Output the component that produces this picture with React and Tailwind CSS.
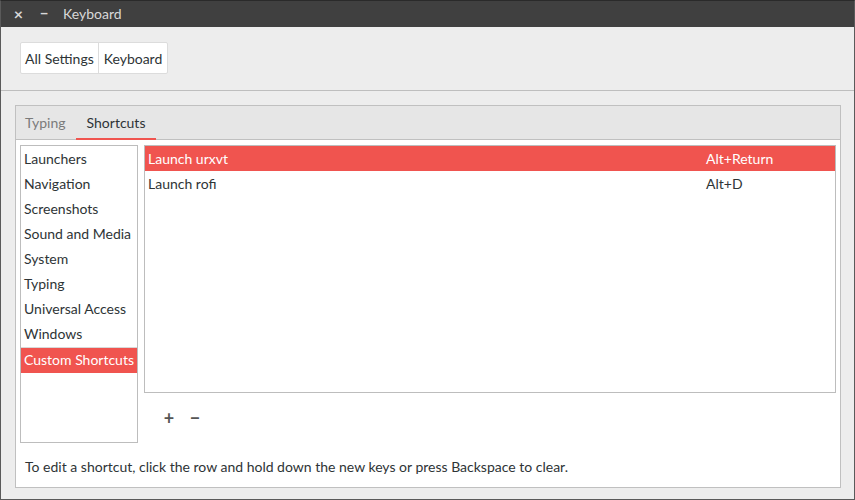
const CATEGORIES = [
  'Launchers',
  'Navigation',
  'Screenshots',
  'Sound and Media',
  'System',
  'Typing',
  'Universal Access',
  'Windows',
];

const SHORTCUTS = [
  { name: 'Launch urxvt', keys: 'Alt+Return', selected: true },
  { name: 'Launch rofi', keys: 'Alt+D', selected: false },
];

export default function App() {
  return (
    <div
      className="w-[855px] h-[500px] flex flex-col bg-[#ededed] border border-[#5a5a5a] border-t-[#2a2a2a] overflow-hidden text-[14px] text-[#2e3436]"
      style={{ fontFamily: '"Lato", "Noto Sans", sans-serif' }}
    >
      <div className="h-[26px] shrink-0 flex items-center bg-[#404040] text-[#d8d8d8] pb-[1px]">
        <span className="w-[17px] ml-[9px] text-center text-[16px] font-bold leading-none">×</span>
        <span className="w-[12px] ml-[11px] text-center text-[15px] font-bold leading-none">−</span>
        <span className="ml-[13px]">Keyboard</span>
      </div>

      <div className="h-[64px] shrink-0 border-b border-[#bebebe] pt-[15px] pl-[19px]">
        <div className="inline-flex h-[32px] bg-white border border-[#dcdcdc] rounded-[2px]">
          <div className="px-[4px] flex items-center border-r border-[#dcdcdc]">All Settings</div>
          <div className="px-[5px] flex items-center">Keyboard</div>
        </div>
      </div>

      <div className="flex-1 mt-[14px] ml-[14px] mr-[13px] mb-[11px] flex flex-col border border-[#c0c0c0]">
        <div className="h-[34px] shrink-0 flex bg-[#e6e6e6] border-b border-[#c0c0c0] pl-[9px]">
          <div className="flex items-center text-[#7b7b7b]">Typing</div>
          <div className="ml-[10px] px-[11px] flex items-center border-b-2 border-[#f0544f] mb-[-1px] pt-[1px]">
            Shortcuts
          </div>
        </div>

        <div className="flex-1 bg-white flex flex-col px-[4px] pt-[5px]">
          <div className="flex gap-[6px]">
            <div className="w-[118px] h-[298px] shrink-0 border border-[#bdbdbd] flex flex-col">
              {CATEGORIES.map((c) => (
                <div key={c} className="h-[25px] flex items-center pl-[3px]">
                  {c}
                </div>
              ))}
              <div className="mt-[1px] border-t border-[#d8d8d8] h-[26px] bg-[#f0544f] text-white flex items-center pl-[3px] pb-[2px]">
                Custom Shortcuts
              </div>
            </div>

            <div className="flex-1 flex flex-col">
              <div className="h-[248px] border border-[#bdbdbd]">
                {SHORTCUTS.map((s) => (
                  <div
                    key={s.name}
                    className={`h-[25px] flex items-center pl-[3px] ${s.selected ? 'bg-[#f0544f] text-white' : ''}`}
                  >
                    <span className="w-[558px]">{s.name}</span>
                    <span>{s.keys}</span>
                  </div>
                ))}
              </div>
              <div className="flex items-center h-[50px] pl-[18px] text-[#555] text-[18px] font-bold">
                <span className="w-[14px] text-center">+</span>
                <span className="ml-[12px] w-[14px] text-center">−</span>
              </div>
            </div>
          </div>
          <div className="mt-[13px] pl-[5px]">
            To edit a shortcut, click the row and hold down the new keys or press Backspace to clear.
          </div>
        </div>
      </div>
    </div>
  );
}
